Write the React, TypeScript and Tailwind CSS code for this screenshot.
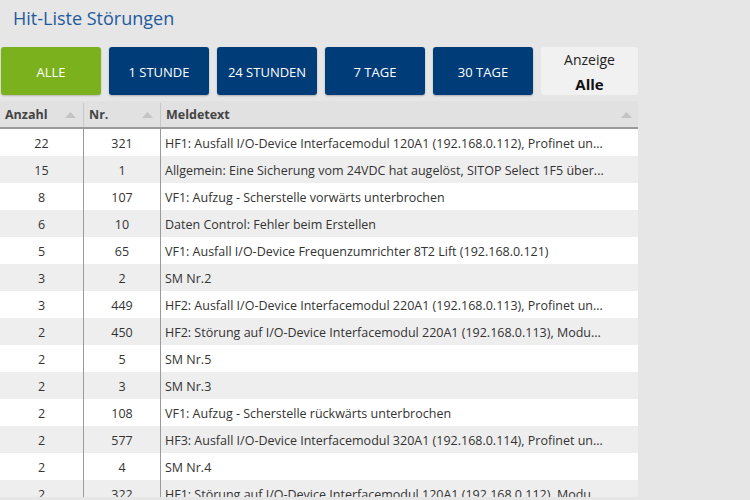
const rows: [number, number, string][] = [
  [22, 321, 'HF1: Ausfall I/O-Device Interfacemodul 120A1 (192.168.0.112), Profinet un...'],
  [15, 1, 'Allgemein: Eine Sicherung vom 24VDC hat augelöst, SITOP Select 1F5 über...'],
  [8, 107, 'VF1: Aufzug - Scherstelle vorwärts unterbrochen'],
  [6, 10, 'Daten Control: Fehler beim Erstellen'],
  [5, 65, 'VF1: Ausfall I/O-Device Frequenzumrichter 8T2 Lift (192.168.0.121)'],
  [3, 2, 'SM Nr.2'],
  [3, 449, 'HF2: Ausfall I/O-Device Interfacemodul 220A1 (192.168.0.113), Profinet un...'],
  [2, 450, 'HF2: Störung auf I/O-Device Interfacemodul 220A1 (192.168.0.113), Modu...'],
  [2, 5, 'SM Nr.5'],
  [2, 3, 'SM Nr.3'],
  [2, 108, 'VF1: Aufzug - Scherstelle rückwärts unterbrochen'],
  [2, 577, 'HF3: Ausfall I/O-Device Interfacemodul 320A1 (192.168.0.114), Profinet un...'],
  [2, 4, 'SM Nr.4'],
  [2, 322, 'HF1: Störung auf I/O-Device Interfacemodul 120A1 (192.168.0.112), Modu...'],
];

const ranges = ['1 STUNDE', '24 STUNDEN', '7 TAGE', '30 TAGE'];

function SortArrow() {
  return (
    <svg width="11" height="6" viewBox="0 0 11 6" className="shrink-0">
      <path d="M0 6 L5.5 0 L11 6 Z" fill="#c4c4c4" />
    </svg>
  );
}

export default function App() {
  return (
    <div
      className="w-[750px] h-[500px] overflow-hidden bg-[#e6e6e6] text-[#333]"
      style={{ fontFamily: "'Open Sans', 'Noto Sans', sans-serif" }}
    >
      <h1 className="h-[36px] pl-[13px] pt-[5px] text-[18px] leading-[26px] text-[#1f5a9c]">Hit-Liste Störungen</h1>

      {/* Zeitraum-Auswahl */}
      <div className="flex gap-[8px] mt-[11px] pl-[1px] h-[48px]">
        <button className="w-[100px] pt-[3px] rounded-[3px] bg-[#7cb11e] text-white text-[13px] shadow-[0_1px_2px_rgba(0,0,0,0.2)]">
          ALLE
        </button>
        {ranges.map((r) => (
          <button
            key={r}
            className="w-[100px] pt-[3px] rounded-[3px] bg-[#003c77] text-white text-[13px] shadow-[0_1px_2px_rgba(0,0,0,0.25)]"
          >
            {r}
          </button>
        ))}
        <div className="w-[97px] pt-[2px] rounded-[3px] bg-[#f1f1f1] flex flex-col items-center justify-center">
          <span className="text-[14px] leading-[24px] text-[#222]">Anzeige</span>
          <span className="text-[15px] leading-[24px] font-bold text-[#111]">Alle</span>
        </div>
      </div>

      {/* Tabelle */}
      <div className="mt-[6px] w-[638px] h-[396px] overflow-hidden text-[12.5px]">
        <div className="flex h-[28px] pt-[2px] bg-[#e1e1e1] border-b-2 border-[#9a9a9a] font-bold text-[#444]">
          <div className="w-[84px] border-r border-[#c8c8c8] flex items-center justify-between pl-[5px] pr-[7px]">
            <span>Anzahl</span>
            <SortArrow />
          </div>
          <div className="w-[77px] border-r border-[#c8c8c8] flex items-center justify-between pl-[5px] pr-[7px]">
            <span>Nr.</span>
            <SortArrow />
          </div>
          <div className="flex-1 flex items-center justify-between pl-[5px] pr-[6px]">
            <span>Meldetext</span>
            <SortArrow />
          </div>
        </div>
        {rows.map(([count, nr, text], i) => (
          <div key={i} className={`flex h-[27px] items-stretch ${i % 2 === 0 ? 'bg-white' : 'bg-[#eeeeee]'}`}>
            <div className="w-[84px] pt-[3px] border-r border-[#9a9a9a] flex items-center justify-center">{count}</div>
            <div className="w-[77px] pt-[3px] border-r border-[#9a9a9a] flex items-center justify-center">{nr}</div>
            <div className="flex-1 pt-[3px] flex items-center pl-[4px] whitespace-nowrap overflow-hidden">{text}</div>
          </div>
        ))}
      </div>
    </div>
  );
}
